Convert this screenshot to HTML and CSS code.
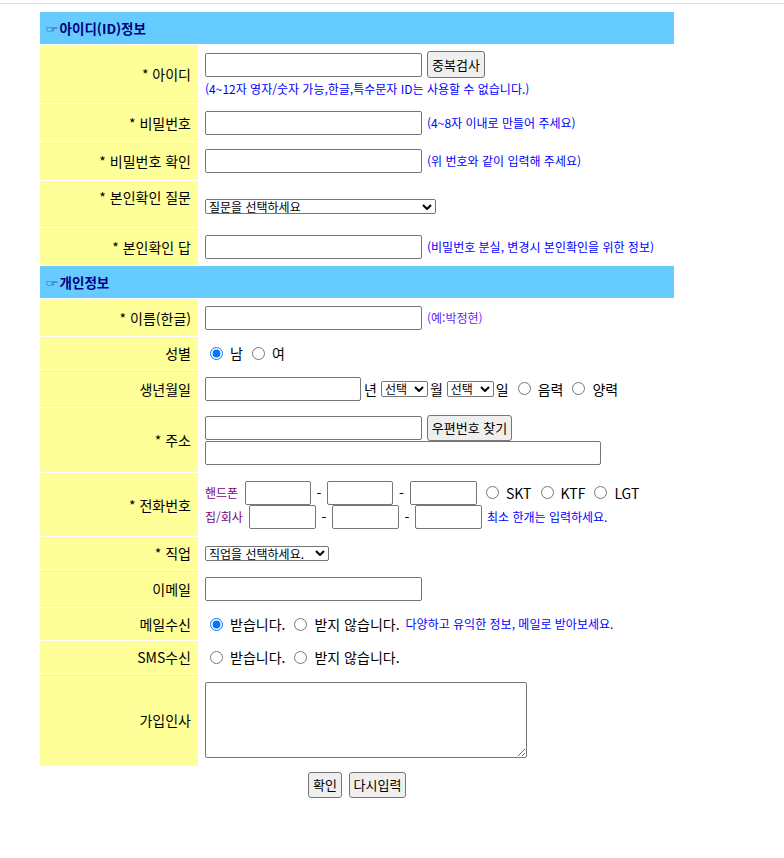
FILE: index.html
```html
<!DOCTYPE html>
<html lang="ko">
<head>
<meta charset="utf-8">
<title>회원가입</title>
<link rel="stylesheet" href="styles.css">
</head>
<body>
<div class="topline"></div>
<form class="join">
<table class="form">
<colgroup><col class="c1"><col class="c2"></colgroup>
<tr class="h32"><td class="hd" colspan="2"><span class="hand">☞</span>아이디(ID)정보</td></tr>
<tr class="h58"><td class="lb">* 아이디</td><td class="vl">
  <div class="line"><input type="text" class="in w217"><button type="button" class="btn b58">중복검사</button></div>
  <div class="note under">(4~12자 영자/숫자 가능,한글,특수문자 ID는 사용할 수 없습니다.)</div>
</td></tr>
<tr class="h37"><td class="lb">* 비밀번호</td><td class="vl">
  <div class="line"><input type="password" class="in w217"><span class="note">(4~8자 이내로 만들어 주세요)</span></div>
</td></tr>
<tr class="h38"><td class="lb">* 비밀번호 확인</td><td class="vl">
  <div class="line"><input type="password" class="in w217"><span class="note">(위 번호와 같이 입력해 주세요)</span></div>
</td></tr>
<tr class="h46"><td class="lb top"><div class="toplabel">* 본인확인 질문</div></td><td class="vl top">
  <div class="topsel"><span class="selwrap"><select class="sel w231"><option>질문을 선택하세요</option></select><svg class="chev" viewBox="0 0 10 6" width="10" height="6"><path d="M1 1 L5 5 L9 1" fill="none" stroke="#000" stroke-width="2"/></svg></span></div>
</td></tr>
<tr class="h37"><td class="lb">* 본인확인 답</td><td class="vl">
  <div class="line"><input type="text" class="in w217"><span class="note">(비밀번호 분실, 변경시 본인확인을 위한 정보)</span></div>
</td></tr>
<tr class="h32"><td class="hd" colspan="2"><span class="hand">☞</span>개인정보</td></tr>
<tr class="h37"><td class="lb">* 이름(한글)</td><td class="vl">
  <div class="line"><input type="text" class="in w217"><span class="note violet">(예:박정현)</span></div>
</td></tr>
<tr class="h32"><td class="lb">성별</td><td class="vl">
  <div class="line">
    <label class="rd"><input type="radio" name="sex" checked>남</label>
    <label class="rd gap"><input type="radio" name="sex">여</label>
  </div>
</td></tr>
<tr class="h37"><td class="lb">생년월일</td><td class="vl">
  <div class="line">
    <input type="text" class="in w156"><span class="u1">년</span><span class="selwrap"><select class="sel s16 w47"><option>선택</option></select><svg class="chev" viewBox="0 0 10 6" width="10" height="6"><path d="M1 1 L5 5 L9 1" fill="none" stroke="#000" stroke-width="2"/></svg></span><span class="u2">월</span><span class="selwrap"><select class="sel s16 w47"><option>선택</option></select><svg class="chev" viewBox="0 0 10 6" width="10" height="6"><path d="M1 1 L5 5 L9 1" fill="none" stroke="#000" stroke-width="2"/></svg></span><span class="u3">일</span>
    <label class="rd gap"><input type="radio" name="cal">음력</label>
    <label class="rd gap"><input type="radio" name="cal">양력</label>
  </div>
</td></tr>
<tr class="h64"><td class="lb">* 주소</td><td class="vl">
  <div class="line"><input type="text" class="in w217"><button type="button" class="btn b85">우편번호 찾기</button></div>
  <div class="line"><input type="text" class="in w396"></div>
</td></tr>
<tr class="h63"><td class="lb">* 전화번호</td><td class="vl">
  <div class="line">
    <span class="ph p1">핸드폰</span><input type="text" class="in w66"><span class="dash">-</span><input type="text" class="in w66"><span class="dash d17">-</span><input type="text" class="in w67">
    <label class="rd gap"><input type="radio" name="tel">SKT</label>
    <label class="rd gap"><input type="radio" name="tel">KTF</label>
    <label class="rd gap"><input type="radio" name="tel">LGT</label>
  </div>
  <div class="line">
    <span class="ph p2">집/회사</span><input type="text" class="in w67"><span class="dash">-</span><input type="text" class="in w67"><span class="dash">-</span><input type="text" class="in w67"><span class="note">최소 한개는 입력하세요.</span>
  </div>
</td></tr>
<tr class="h32"><td class="lb">* 직업</td><td class="vl">
  <div class="line"><span class="selwrap"><select class="sel w124"><option>직업을 선택하세요.</option></select><svg class="chev" viewBox="0 0 10 6" width="10" height="6"><path d="M1 1 L5 5 L9 1" fill="none" stroke="#000" stroke-width="2"/></svg></span></div>
</td></tr>
<tr class="h37"><td class="lb">이메일</td><td class="vl">
  <div class="line"><input type="text" class="in w217"></div>
</td></tr>
<tr class="h32"><td class="lb">메일수신</td><td class="vl">
  <div class="line">
    <label class="rd"><input type="radio" name="mail" checked>받습니다.</label>
    <label class="rd gap"><input type="radio" name="mail">받지 않습니다.</label>
    <span class="note wide">다양하고 유익한 정보, 메일로 받아보세요.</span>
  </div>
</td></tr>
<tr class="h32"><td class="lb">SMS수신</td><td class="vl">
  <div class="line">
    <label class="rd"><input type="radio" name="sms">받습니다.</label>
    <label class="rd gap"><input type="radio" name="sms">받지 않습니다.</label>
  </div>
</td></tr>
<tr class="h92"><td class="lb">가입인사</td><td class="vl">
  <textarea class="memo"></textarea>
</td></tr>
</table>
<div class="actions">
  <button type="submit" class="btn b34">확인</button><button type="reset" class="btn b57">다시입력</button>
</div>
</form>
</body>
</html>
```

FILE: styles.css
```css
* { box-sizing: border-box; }

body {
  margin: 0;
  font-family: "Noto Sans CJK KR", "Malgun Gothic", sans-serif;
  font-size: 14px;
  color: #000;
  background: #fff;
}

.topline {
  margin-top: 3px;
  height: 1px;
  background: #dedede;
}

.join { margin: 0; }

.form {
  border-spacing: 1px;
  margin: 7px 0 0 39px;
  width: 636px;
  table-layout: fixed;
}

.c1 { width: 158px; }
.c2 { width: 475px; }

.form td {
  padding: 0;
  vertical-align: middle;
  line-height: 18px;
}

.form td.hd {
  background: #66ccff;
  color: #000080;
  font-weight: bold;
  font-size: 13.5px;
  padding-left: 6px;
}

.hand {
  font-family: "DejaVu Sans", sans-serif;
  font-weight: normal;
  font-size: 14px;
  display: inline-block;
  transform: scale(1.1, 0.6);
  margin-right: 1px;
}

.form td.lb {
  background: #ffff99;
  text-align: right;
  padding-right: 7px;
}

.form td.vl { padding-left: 6px; }
.form td.top { vertical-align: top; }

.toplabel { padding-top: 7px; }
.topsel { padding-top: 18px; line-height: 0; }

.h32 td { height: 32px; }
.h37 td { height: 37px; }
.h38 td { height: 38px; }
.h46 td { height: 46px; }
.h58 td { height: 58px; }
.h63 td { height: 63px; }
.h64 td { height: 64px; }
.h92 td { height: 92px; }

.line {
  display: flex;
  align-items: center;
}

.in {
  height: 24px;
  margin: 0;
  padding: 1px 3px;
  border: 1px solid #767676;
  border-radius: 2px;
  background: #fff;
  font-family: inherit;
  font-size: 13px;
}

.w66 { width: 66px; }
.w67 { width: 67px; }
.w156 { width: 156px; }
.w217 { width: 217px; }
.w396 { width: 396px; }

.btn {
  height: 27px;
  margin: 0;
  padding: 0;
  border: 1px solid #767676;
  border-radius: 3px;
  background: #efefef;
  color: #000;
  font-family: inherit;
  font-size: 13px;
  line-height: 18px;
}

.b58 { width: 58px; margin-left: 5px; }
.b85 { width: 85px; height: 26px; margin-left: 5px; }
.b34 { width: 34px; height: 26px; }
.b57 { width: 57px; height: 26px; margin-left: 7px; }

.selwrap {
  position: relative;
  display: inline-block;
  line-height: 0;
}

.sel {
  -webkit-appearance: none;
  appearance: none;
  display: block;
  height: 15px;
  margin: 0;
  padding: 0 14px 0 3px;
  border: 1px solid #767676;
  border-radius: 2px;
  background: #fff;
  color: #000;
  font-family: inherit;
  font-size: 12px;
  line-height: 13px;
}

.chev {
  position: absolute;
  right: 4px;
  top: 50%;
  margin-top: -3px;
  pointer-events: none;
}

.s16 { height: 16px; line-height: 14px; }
.w47 { width: 47px; }
.w124 { width: 124px; }
.w231 { width: 231px; }

.note {
  font-size: 12px;
  line-height: 16px;
  color: #0000ff;
  margin-left: 5px;
  white-space: nowrap;
}

.note.under { margin: 3px 0 0 0; }
.note.violet { color: #6a1bff; }
.note.wide { margin-left: 6px; }

.u1 { margin: 0 4px 0 3px; }
.u2 { margin: 0 4px 0 2px; }
.u3 { margin-left: 2px; }

.rd {
  display: inline-flex;
  align-items: center;
  white-space: nowrap;
}

.rd input {
  width: 13px;
  height: 13px;
  margin: 0 7px 0 5px;
}

.rd.gap { margin-left: 4px; }

.ph {
  color: #800080;
  font-size: 12px;
  white-space: nowrap;
}

.p1 { width: 40px; }
.p2 { width: 44px; }

.dash {
  width: 16px;
  text-align: center;
}

.dash.d17 { width: 17px; }

.memo {
  display: block;
  width: 322px;
  height: 76px;
  margin: 0;
  border: 1px solid #767676;
  border-radius: 2px;
  font-family: inherit;
  font-size: 13px;
}

.actions {
  width: 636px;
  margin: 5px 0 0 39px;
  display: flex;
  justify-content: center;
}
```
